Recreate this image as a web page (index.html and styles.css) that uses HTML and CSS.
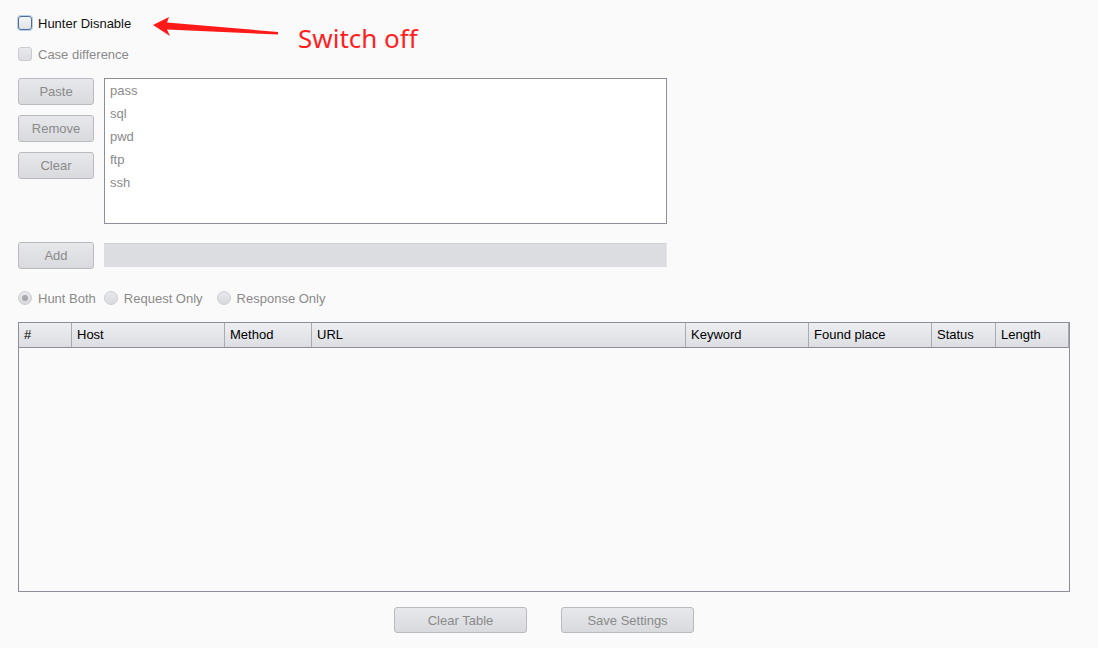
FILE: index.html
```html
<!DOCTYPE html>
<html>
<head>
<meta charset="utf-8">
<link rel="stylesheet" href="styles.css">
</head>
<body>
<div class="page">
  <div class="row top-row">
    <span class="check check-focus"></span>
    <span class="label dark">Hunter Disnable</span>
    <svg class="arrow" width="132" height="26" viewBox="0 0 132 26">
      <polygon points="3,11 19,3 17,8.5 128,18 128,20.5 17,15.5 20,22" fill="#ff1a1a"/>
    </svg>
    <span class="note">Switch off</span>
  </div>
  <div class="row second-row">
    <span class="check check-disabled"></span>
    <span class="label">Case difference</span>
  </div>

  <div class="editor">
    <div class="btn-col">
      <button class="btn side">Paste</button>
      <button class="btn side">Remove</button>
      <button class="btn side">Clear</button>
    </div>
    <div class="list">
      <div class="item">pass</div>
      <div class="item">sql</div>
      <div class="item">pwd</div>
      <div class="item">ftp</div>
      <div class="item">ssh</div>
    </div>
  </div>

  <div class="add-row">
    <button class="btn side">Add</button>
    <div class="add-input"></div>
  </div>

  <div class="radio-row">
    <span class="radio checked"></span><span class="label">Hunt Both</span>
    <span class="radio r2"></span><span class="label">Request Only</span>
    <span class="radio r3"></span><span class="label">Response Only</span>
  </div>

  <div class="table">
    <div class="thead">
      <div class="th c1">#</div>
      <div class="th c2">Host</div>
      <div class="th c3">Method</div>
      <div class="th c4">URL</div>
      <div class="th c5">Keyword</div>
      <div class="th c6">Found place</div>
      <div class="th c7">Status</div>
      <div class="th c8">Length</div>
    </div>
  </div>

  <div class="bottom">
    <button class="btn wide">Clear Table</button>
    <button class="btn wide">Save Settings</button>
  </div>
</div>
</body>
</html>
```
FILE: styles.css
```css
* { box-sizing: border-box; }
html, body {
  margin: 0;
  padding: 0;
  background: #fafafa;
  font-family: "Liberation Sans", Arial, sans-serif;
  font-size: 13px;
}
.page {
  padding: 16px 28px 0 18px;
  display: flex;
  flex-direction: column;
}
.row {
  display: flex;
  align-items: center;
  height: 14px;
}
.top-row { position: relative; }
.second-row { margin-top: 17px; }
.check {
  width: 14px;
  height: 14px;
  border-radius: 3px;
  flex: none;
}
.check-focus {
  border: 1px solid #4f6d96;
  background: linear-gradient(#f4f5f7, #dfe1e6);
  box-shadow: 0 0 0 1px #b9d0ea;
}
.check-disabled {
  border: 1px solid #c9cbd0;
  background: linear-gradient(#e8e9ec, #dcdde1);
}
.label {
  margin-left: 6px;
  color: #8a8a8a;
  white-space: nowrap;
  font-size: 13px;
}
.label.dark { color: #111; }
.arrow {
  position: absolute;
  left: 132px;
  top: -2px;
  display: block;
}
.note {
  position: absolute;
  left: 280px;
  top: 7px;
  color: #ff1f1f;
  font-family: "Noto Sans", sans-serif;
  font-size: 26px;
  line-height: 30px;
  white-space: nowrap;
}
.editor {
  display: flex;
  margin-top: 17px;
  gap: 10px;
}
.btn-col {
  display: flex;
  flex-direction: column;
  gap: 10px;
}
.btn {
  font-family: "Liberation Sans", Arial, sans-serif;
  font-size: 13px;
  color: #8a8a8a;
  border: 1px solid #b8bac0;
  border-radius: 3px;
  background: linear-gradient(#e7e8eb, #d9dade);
  padding: 0;
}
.btn.side {
  width: 76px;
  height: 27px;
}
.list {
  width: 563px;
  height: 146px;
  border: 1px solid #8e8e99;
  background: #fff;
  padding: 4px 5px;
}
.item {
  height: 23px;
  line-height: 16px;
  color: #8a8a8a;
  font-size: 13px;
}
.add-row {
  display: flex;
  gap: 10px;
  margin-top: 18px;
  align-items: flex-start;
}
.add-input {
  width: 563px;
  height: 24px;
  margin-top: 1px;
  background: #dcdde1;
  border-top: 1px solid #cfd0d5;
  border-right: 1px solid #e4e5e8;
}
.radio-row {
  display: flex;
  align-items: center;
  height: 14px;
  margin-top: 22px;
}
.radio {
  width: 14px;
  height: 14px;
  border-radius: 50%;
  border: 1px solid #cdced2;
  background: linear-gradient(#e8e9ec, #d8d9dd);
  flex: none;
  position: relative;
}
.radio.r2 { margin-left: 8px; }
.radio.r3 { margin-left: 14px; }
.radio.checked::after {
  content: "";
  position: absolute;
  left: 3px;
  top: 3px;
  width: 6px;
  height: 6px;
  border-radius: 50%;
  background: #a8a9ad;
}
.table {
  margin-top: 17px;
  height: 270px;
  border: 1px solid #8e8e99;
  background: #fafafa;
}
.thead {
  display: flex;
  height: 25px;
  border-bottom: 1px solid #8e8e99;
  background: linear-gradient(#eceef1, #dcdee3);
  width: 1050px;
  border-right: 1px solid #a9abb2;
}
.th {
  height: 100%;
  line-height: 24px;
  padding-left: 5px;
  color: #000;
  font-size: 13px;
  border-right: 1px solid #a9abb2;
  white-space: nowrap;
}
.th:last-child { border-right: none; }
.c1 { width: 53px; }
.c2 { width: 153px; }
.c3 { width: 87px; }
.c4 { width: 374px; }
.c5 { width: 123px; }
.c6 { width: 123px; }
.c7 { width: 64px; }
.c8 { flex: 1; }
.bottom {
  display: flex;
  justify-content: center;
  gap: 34px;
  margin-top: 15px;
}
.btn.wide {
  width: 133px;
  height: 26px;
}
```
